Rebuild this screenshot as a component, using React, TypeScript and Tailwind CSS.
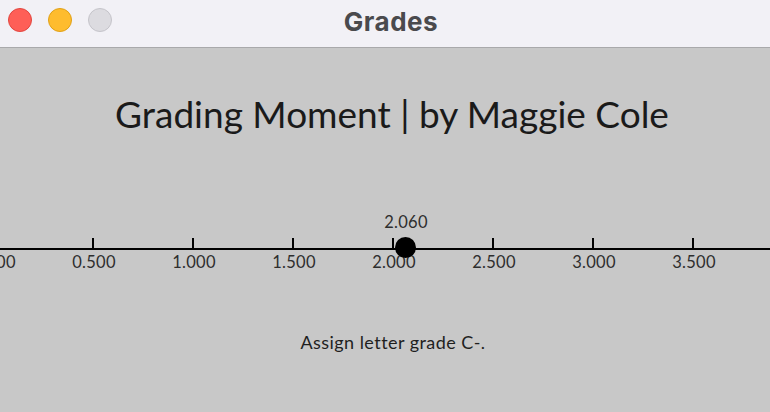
import React from 'react';

const ticks = [0, 0.5, 1, 1.5, 2, 2.5, 3, 3.5, 4];
const value = 2.06;
const toX = (v: number) => -7 + v * 200;

const NumberLine: React.FC = () => (
  <svg width="770" height="80" viewBox="0 200 770 80" className="block">
    <line x1="0" y1="249" x2="770" y2="249" stroke="#000" strokeWidth="2" />
    {ticks.map((t) => (
      <g key={t}>
        <line x1={toX(t)} y1="238" x2={toX(t)} y2="249" stroke="#000" strokeWidth="2" />
        <text
          x={toX(t) + 1}
          y="268"
          textAnchor="middle"
          fontSize="16.5"
          letterSpacing="0.3"
          fill="#2e2e2e"
          fontFamily="Lato, 'Noto Sans', sans-serif"
        >
          {t.toFixed(3)}
        </text>
      </g>
    ))}
    <circle cx={toX(value) + 0.5} cy="247.5" r="10.5" fill="#000" />
    <text
      x={toX(value) + 1}
      y="228"
      textAnchor="middle"
      fontSize="16.5"
      letterSpacing="0.3"
      fill="#2e2e2e"
      fontFamily="Lato, 'Noto Sans', sans-serif"
    >
      {value.toFixed(3)}
    </text>
  </svg>
);

const App: React.FC = () => {
  return (
    <div className="w-[770px] h-[412px] overflow-hidden bg-[#c8c8c8] flex flex-col">
      {/* Window title bar */}
      <div className="h-12 shrink-0 bg-[#f2f1f6] border-b border-[#a9a9ab] relative flex items-center justify-center">
        <div className="absolute left-2 top-2 flex gap-4">
          <span className="w-6 h-6 rounded-full bg-[#fe5f57] border border-[#e2463f]" />
          <span className="w-6 h-6 rounded-full bg-[#febc2e] border border-[#e1a116]" />
          <span className="w-6 h-6 rounded-full bg-[#dcdbe0] border border-[#c5c4ca]" />
        </div>
        <span className="ml-3 text-[26px] tracking-[0.02em] font-bold text-[#4a4a4d] font-['Inter',sans-serif] -mt-1">
          Grades
        </span>
      </div>

      <div className="flex flex-col items-center">
        <h1 className="mt-[41px] ml-[14px] h-[50px] leading-[50px] text-[37px] text-[#1a1a1a] font-['Lato',sans-serif]">
          Grading Moment | by Maggie Cole
        </h1>
        <div className="mt-[61px]">
          <NumberLine />
        </div>
        <p className="mt-[50px] ml-[16px] leading-6 text-[18px] tracking-[0.025em] text-[#1f1f1f] font-['Lato',sans-serif]">
          Assign letter grade C-.
        </p>
      </div>
    </div>
  );
};

export default App;
